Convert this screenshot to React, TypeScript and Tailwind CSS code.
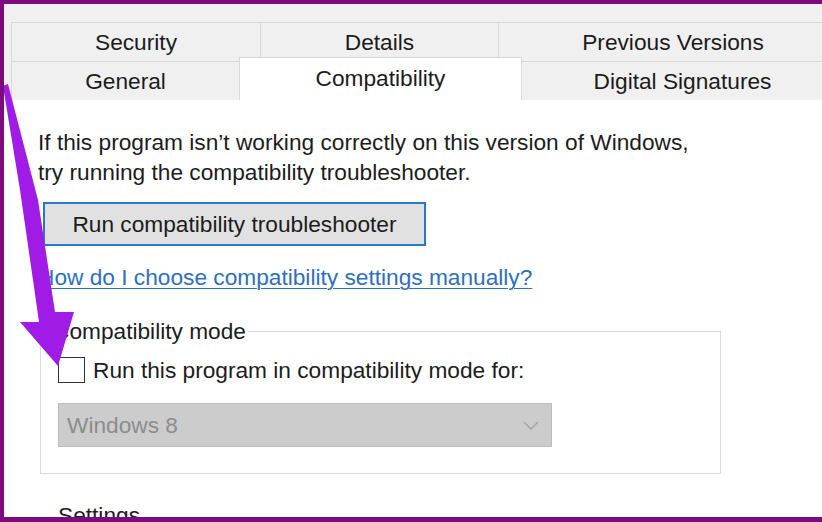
export default function App() {
  return (
    <div className="relative w-[822px] h-[522px] overflow-hidden bg-white border-l-4 border-t-4 border-b-[5px] border-[#7d0b7d] font-['Liberation_Sans',Arial,sans-serif] text-[22.7px] text-[#1c1c1c]">
      {/* tab strip */}
      <div className="bg-[#f0f0f0] pt-[18px] pl-[7px]">
        <div className="flex h-[39px] w-[900px]">
          <div className="w-[249px] flex items-center justify-center border-t border-l border-[#d9d9d9]">Security</div>
          <div className="w-[238px] flex items-center justify-center border-t border-l border-[#d9d9d9]">Details</div>
          <div className="w-[350px] flex items-center justify-center border-t border-l border-r border-[#d9d9d9]">Previous Versions</div>
        </div>
        <div className="flex h-[39px] w-[900px] items-end">
          <div className="w-[228px] h-full flex items-center justify-center border-t border-l border-[#d9d9d9]">General</div>
          <div className="relative z-10 w-[283px] h-[43px] flex items-center justify-center bg-white border-t border-l border-r border-[#d9d9d9] pb-[2px]">
            Compatibility
          </div>
          <div className="w-[322px] h-full flex items-center justify-center border-t border-r border-[#d9d9d9]">Digital Signatures</div>
        </div>
      </div>

      {/* page content */}
      <div className="pl-[34px] pt-[27px]">
        <p className="leading-[30px]">
          If this program isn’t working correctly on this version of Windows,
          <br />
          try running the compatibility troubleshooter.
        </p>
        <button className="mt-[15px] ml-[5px] w-[383px] h-[44px] bg-[#e1e1e1] border-2 border-[#2878c6] text-[#1c1c1c]">
          Run compatibility troubleshooter
        </button>
        <div className="mt-[16px] leading-[30px]">
          <a href="#" className="text-[#2f6fbb] underline underline-offset-[3px] decoration-1">
            How do I choose compatibility settings manually?
          </a>
        </div>

        <fieldset className="mt-[26px] ml-[2px] w-[681px] h-[156px] border border-[#dadada] pl-[17px]">
          <legend className="-ml-[6px] px-[1px] leading-[26px]">Compatibility mode</legend>
          <label className="flex items-center gap-[8px] h-[30px] mt-[11px]">
            <span className="w-[27px] h-[26px] border-[1.5px] border-[#333] bg-white" />
            <span>Run this program in compatibility mode for:</span>
          </label>
          <div className="mt-[18px] w-[494px] h-[44px] flex items-center justify-between bg-[#cccccc] border border-[#bdbdbd] pl-[8px] pr-[12px] text-[#8c8c8c]">
            <span>Windows 8</span>
            <svg width="16" height="9" viewBox="0 0 16 9" fill="none">
              <polyline points="1,1 8,8 15,1" stroke="#a3a3a3" strokeWidth="1.4" />
            </svg>
          </div>
        </fieldset>

        <div className="mt-[28px] ml-[20px] leading-[26px]">Settings</div>
      </div>

      {/* annotation arrow */}
      <svg className="absolute -left-1 -top-1 pointer-events-none" width="822" height="522" viewBox="0 0 822 522">
        <polygon
          points="3,86 8,84 38,200 55,312 74,312 58,366 20,322 39,322 33,280 20,190"
          fill="#a11be6"
        />
      </svg>
    </div>
  );
}
